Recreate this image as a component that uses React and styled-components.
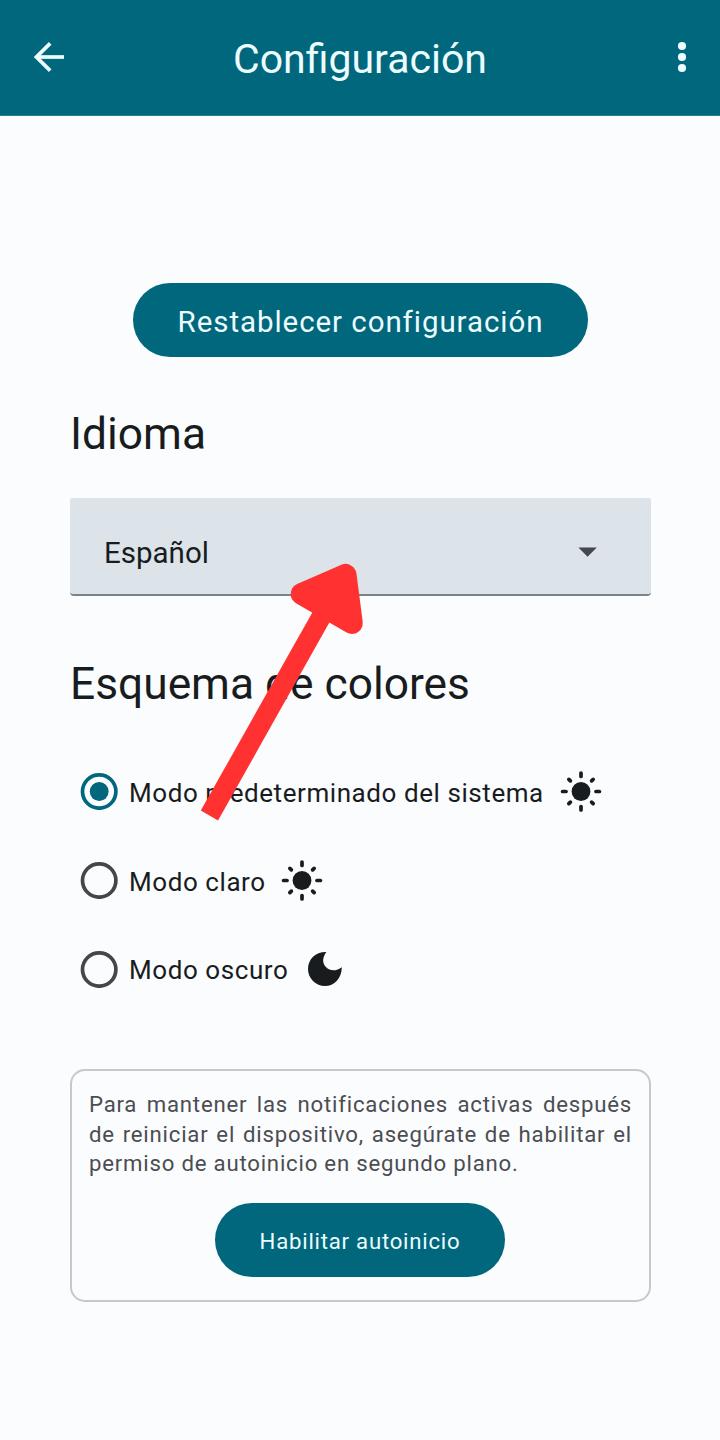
import React, { useState } from "react";
import styled, { createGlobalStyle } from "styled-components";

const colors = {
  primary: "#00677d",
  onPrimary: "#ecfcff",
  surface: "#fbfcfe",
  field: "#dce4e9",
  text: "#191c1e",
  muted: "#4b4d51",
};

const GlobalStyle = createGlobalStyle`
  * { box-sizing: border-box; }
  body {
    margin: 0;
    background: ${colors.surface};
    color: ${colors.text};
    font-family: Roboto, "Liberation Sans", sans-serif;
  }
  button { font-family: inherit; border: 0; padding: 0; background: none; }
`;

const Screen = styled.div`
  position: relative;
  width: 720px;
  height: 1440px;
  overflow: hidden;
  background: ${colors.surface};
`;

const TopBar = styled.header`
  display: grid;
  grid-template-columns: 58px 1fr 58px;
  align-items: center;
  height: 116px;
  padding: 0 20px 2px;
  border-bottom: 1px solid #2b7f92;
  background: ${colors.primary};
  color: ${colors.onPrimary};
`;

const IconButton = styled.button`
  display: flex;
  justify-content: ${(p) => p.$align || "center"};
  padding-right: ${(p) => p.$inset || 0}px;
  color: inherit;
`;

const Title = styled.h1`
  margin: 0;
  padding-top: 5px;
  text-align: center;
  font-size: 41px;
  font-weight: 400;
  line-height: 48px;
`;

const Content = styled.main`
  display: flex;
  flex-direction: column;
  padding: 167px 69px 0 70px;
`;

const PillButton = styled.button`
  align-self: center;
  width: ${(p) => p.$width}px;
  height: 74px;
  padding-top: 3px;
  border-radius: 37px;
  background: ${colors.primary};
  color: ${colors.onPrimary};
  font-size: ${(p) => p.$size}px;
  font-weight: 400;
  letter-spacing: ${(p) => p.$spacing}px;
  white-space: nowrap;
`;

const SectionTitle = styled.h2`
  margin: ${(p) => p.$top}px 0 0;
  font-size: 44.3px;
  font-weight: 400;
  line-height: 52px;
`;

const LanguageSelect = styled.button`
  display: flex;
  align-items: center;
  justify-content: space-between;
  height: 98px;
  margin-top: 38px;
  padding: 12px 53px 0 34px;
  border-bottom: 2px solid #7b8388;
  border-radius: 2px 2px 4px 4px;
  background: ${colors.field};
  color: ${colors.text};
  font-size: 29.5px;
`;

const SelectedLanguage = styled.span`
  padding-top: 2px;
`;

const Options = styled.div`
  display: flex;
  flex-direction: column;
  padding: 37px 0 0 10px;
`;

const Option = styled.button`
  display: flex;
  align-items: center;
  height: 88.8px;
  color: ${colors.text};
`;

const OptionLabel = styled.span`
  padding-top: 3px;
  margin: 0 ${(p) => p.$gap}px 0 11px;
  font-size: 26px;
  line-height: 32px;
  letter-spacing: 0.57px;
  white-space: nowrap;
`;

const Notice = styled.section`
  display: flex;
  flex-direction: column;
  height: 233px;
  margin-top: 55.6px;
  padding: 19px 18px 0 17px;
  border: 2px solid #c6c8cc;
  border-radius: 15px;
`;

const NoticeText = styled.p`
  margin: 0 -1px 24px 0;
  color: ${colors.muted};
  font-size: 22.2px;
  line-height: 29.6px;
  letter-spacing: 0.78px;
`;

const NoticeLine = styled.span`
  display: block;
  text-align-last: ${(p) => (p.$last ? "left" : "justify")};
`;

const Pointer = styled.svg`
  position: absolute;
  left: 190px;
  top: 550px;
  pointer-events: none;
`;

const BackIcon = () => (
  <svg width="32" height="32" viewBox="0 0 32 32" fill="none" stroke="currentColor" strokeWidth="3.7">
    <path d="M31 16H4" />
    <path d="M17.2 2.4 3.4 16l13.8 13.6" strokeLinejoin="miter" />
  </svg>
);

const MoreIcon = () => (
  <svg width="10" height="32" viewBox="0 0 10 32" fill="currentColor">
    <circle cx="5" cy="5" r="4.1" />
    <circle cx="5" cy="16" r="4.1" />
    <circle cx="5" cy="27" r="4.1" />
  </svg>
);

const CaretIcon = () => (
  <svg width="20" height="12" viewBox="0 0 20 12">
    <path d="M.4 1.5h18.4L9.6 10.7z" fill="#45464f" />
  </svg>
);

const RadioIcon = ({ checked }) => (
  <svg width="38" height="38" viewBox="0 0 38 38">
    <circle cx="19.2" cy="19.5" r="16.7" fill="none" stroke={checked ? colors.primary : "#44474a"} strokeWidth="3.7" />
    {checked && <circle cx="19.2" cy="19.5" r="9.4" fill={colors.primary} />}
  </svg>
);

const SunIcon = () => (
  <svg width="42" height="42" viewBox="-21 -21.5 42 42">
    <circle r="9.4" fill={colors.text} />
    {[0, 45, 90, 135, 180, 225, 270, 315].map((angle) => (
      <path
        key={angle}
        d={angle % 90 ? "M0-15v-2.2" : "M0-15v-3.4"}
        transform={`rotate(${angle})`}
        stroke={colors.text}
        strokeWidth="3.7"
        strokeLinecap="round"
      />
    ))}
  </svg>
);

const MoonIcon = () => (
  <svg width="36" height="36" viewBox="0 0 36 36">
    <path d="M19.4 1C15.2 6.6 15.2 12.2 18.9 16c4.2 4.4 10.6 4.4 15.9.2C34.8 27.2 27.4 35 18 35A16.9 16.9 0 0 1 1 18C1 8 9 .6 19.4 1z" fill={colors.text} />
  </svg>
);

const PointerArrow = () => (
  <Pointer width="190" height="280" viewBox="190 550 190 280">
    <path d="M200.8 810.6 316 606l17 10L218 820.6z" fill="#ff3131" />
    <path d="M301.4 593.8 345.7 574.7l6.3 48.4z" fill="#ff3131" stroke="#ff3131" strokeWidth="21.6" strokeLinejoin="round" />
  </Pointer>
);

const modes = [
  { id: "system", label: "Modo predeterminado del sistema", icon: SunIcon, gap: 16 },
  { id: "light", label: "Modo claro", icon: SunIcon, gap: 15.5 },
  { id: "dark", label: "Modo oscuro", icon: MoonIcon, gap: 19 },
];

export default function App() {
  const [mode, setMode] = useState("system");

  return (
    <Screen>
      <GlobalStyle />
      <TopBar>
        <IconButton aria-label="Volver"><BackIcon /></IconButton>
        <Title>Configuración</Title>
        <IconButton $align="flex-end" $inset={13} aria-label="Más opciones"><MoreIcon /></IconButton>
      </TopBar>
      <Content>
        <PillButton $width={455} $size={29.5} $spacing={0.93}>Restablecer configuración</PillButton>
        <SectionTitle $top={51}>Idioma</SectionTitle>
        <LanguageSelect>
          <SelectedLanguage>Español</SelectedLanguage>
          <CaretIcon />
        </LanguageSelect>
        <SectionTitle $top={62}>Esquema de colores</SectionTitle>
        <Options>
          {modes.map(({ id, label, icon: Icon, gap }) => (
            <Option key={id} onClick={() => setMode(id)}>
              <RadioIcon checked={mode === id} />
              <OptionLabel $gap={gap}>{label}</OptionLabel>
              <Icon />
            </Option>
          ))}
        </Options>
        <Notice>
          <NoticeText>
            <NoticeLine>Para mantener las notificaciones activas después</NoticeLine>
            <NoticeLine>de reiniciar el dispositivo, asegúrate de habilitar el</NoticeLine>
            <NoticeLine $last>permiso de autoinicio en segundo plano.</NoticeLine>
          </NoticeText>
          <PillButton $width={290} $size={22.2} $spacing={0.76}>Habilitar autoinicio</PillButton>
        </Notice>
      </Content>
      <PointerArrow />
    </Screen>
  );
}
